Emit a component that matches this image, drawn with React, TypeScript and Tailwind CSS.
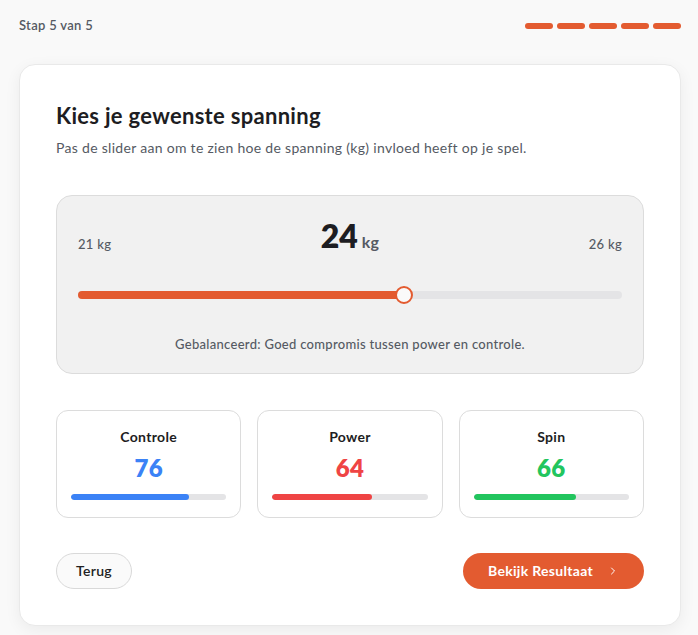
import { ChevronRight } from "lucide-react";

const stats = [
  { label: "Controle", value: 76, text: "text-[#3b82f6]", bar: "bg-[#3b82f6]" },
  { label: "Power", value: 64, text: "text-[#ef4444]", bar: "bg-[#ef4444]" },
  { label: "Spin", value: 66, text: "text-[#22c55e]", bar: "bg-[#22c55e]" },
];

export default function App() {
  const min = 21;
  const max = 26;
  const tension = 24;
  const pct = ((tension - min) / (max - min)) * 100;

  return (
    <div className="min-h-screen bg-[#f9f9f9] pt-[17px] pl-[19px] pr-[17px] tracking-[0.3px] font-['Lato','Noto_Sans',sans-serif]">
      {/* Step header */}
      <div className="flex items-center justify-between h-[18px]">
        <span className="text-[13px] font-semibold text-[#555a63]">Stap 5 van 5</span>
        <div className="flex gap-1">
          {[0, 1, 2, 3, 4].map((i) => (
            <span key={i} className="w-7 h-1.5 rounded-full bg-[#e35b30]" />
          ))}
        </div>
      </div>

      <div className="mt-[29px] bg-white rounded-2xl border border-[#e9e9e9] shadow-[0_4px_16px_rgba(0,0,0,0.06)] px-9 pt-[37px] pb-9">
        <h1 className="text-[22px] leading-7 font-bold text-[#1d1d22]">Kies je gewenste spanning</h1>
        <p className="mt-2 text-sm leading-5 text-[#555a63]">
          Pas de slider aan om te zien hoe de spanning (kg) invloed heeft op je spel.
        </p>

        {/* Slider panel */}
        <div className="mt-[37px] rounded-2xl border border-[#dcdcdc] bg-[#f1f1f1] px-[21px] pt-[22px] pb-[19px]">
          <div className="flex items-end justify-between">
            <span className="text-[13px] leading-5 font-medium text-[#555a63]">{min} kg</span>
            <div className="flex items-baseline gap-1">
              <span className="text-[32px] leading-9 font-extrabold tracking-normal text-[#1d1d22]">{tension}</span>
              <span className="text-base font-bold text-[#555a63]">kg</span>
            </div>
            <span className="text-[13px] leading-5 font-medium text-[#555a63]">{max} kg</span>
          </div>

          <div className="relative mt-[37px] h-2 rounded-full bg-[#e4e4e6]">
            <div className="h-2 rounded-full bg-[#e35b30]" style={{ width: `${pct}%` }} />
            <div
              className="absolute top-1/2 w-[18px] h-[18px] -translate-x-1/2 -translate-y-1/2 rounded-full bg-[#fafafa] border-2 border-[#e35b30]"
              style={{ left: `${pct}%` }}
            />
          </div>

          <p className="mt-[35px] text-center text-[13px] leading-5 font-medium text-[#555a63]">
            Gebalanceerd: Goed compromis tussen power en controle.
          </p>
        </div>

        {/* Stats */}
        <div className="mt-9 grid grid-cols-3 gap-4">
          {stats.map((s) => (
            <div key={s.label} className="rounded-xl border border-[#dcdcdc] bg-white px-3.5 pt-4 pb-[17px] text-center">
              <p className="text-sm leading-5 font-bold text-[#1d1d22]">{s.label}</p>
              <p className={`mt-[5px] text-2xl leading-8 font-extrabold ${s.text}`}>{s.value}</p>
              <div className="mt-[10px] h-1.5 rounded-full bg-[#e4e4e6] overflow-hidden">
                <div className={`h-full rounded-full ${s.bar}`} style={{ width: `${s.value}%` }} />
              </div>
            </div>
          ))}
        </div>

        {/* Actions */}
        <div className="mt-[35px] flex items-center justify-between">
          <button className="h-9 w-[76px] rounded-full border border-[#d9d9d9] bg-[#fafafa] text-sm font-semibold text-[#222]">
            Terug
          </button>
          <button className="h-9 w-[181px] rounded-full bg-[#e35b30] flex items-center justify-center gap-[14px] text-sm font-bold text-white">
            Bekijk Resultaat
            <ChevronRight className="w-3 h-3" strokeWidth={2} />
          </button>
        </div>
      </div>
    </div>
  );
}
